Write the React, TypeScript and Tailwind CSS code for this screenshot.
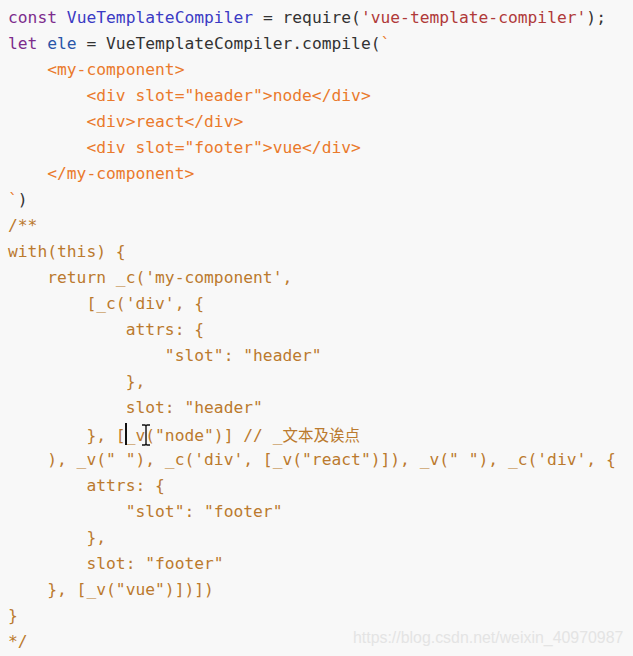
type Tok = [string, string];

const K = 'text-[#7d2c8c]';
const D = 'text-[#3b3bc4]';
const V = 'text-[#2a55a8]';
const P = 'text-[#333333]';
const S = 'text-[#b03a3a]';
const T = 'text-[#ea7a2c]';
const C = 'text-[#bb7a2e]';

const lines: Tok[][] = [
  [[K, 'const'], [P, ' '], [D, 'VueTemplateCompiler'], [P, ' = require('], [S, "'vue-template-compiler'"], [P, ');']],
  [[K, 'let'], [P, ' '], [V, 'ele'], [P, ' = VueTemplateCompiler.compile('], [T, '`']],
  [[T, '    <my-component>']],
  [[T, '        <div slot="header">node</div>']],
  [[T, '        <div>react</div>']],
  [[T, '        <div slot="footer">vue</div>']],
  [[T, '    </my-component>']],
  [[T, '`'], [P, ')']],
  [[C, '/**']],
  [[C, 'with(this) {']],
  [[C, "    return _c('my-component',"]],
  [[C, "        [_c('div', {"]],
  [[C, '            attrs: {']],
  [[C, '                "slot": "header"']],
  [[C, '            },']],
  [[C, '            slot: "header"']],
  [[C, '        }, [_v("node")] // _'], [C + ' cjk', '文本及诶点']],
  [[C, "    ), _v(\" \"), _c('div', [_v(\"react\")]), _v(\" \"), _c('div', {"]],
  [[C, '        attrs: {']],
  [[C, '            "slot": "footer"']],
  [[C, '        },']],
  [[C, '        slot: "footer"']],
  [[C, '    }, [_v("vue")])])']],
  [[C, '}']],
  [[C, '*/']],
];

export default function App() {
  return (
    <div className="relative w-[633px] h-[656px] overflow-hidden bg-[#f8f8f8]">
      <pre className="pl-2 pt-[5px] font-['DejaVu_Sans_Mono',monospace] text-[16.3px] leading-[26px] tracking-normal">
        {lines.map((line, i) => (
          <div key={i} className="h-[26px] whitespace-pre">
            {line.map(([cls, txt], j) => (
              <span
                key={j}
                className={
                  cls.includes('cjk')
                    ? "text-[#bb7a2e] font-['Noto_Sans_CJK_SC',sans-serif] text-[15.5px]"
                    : cls
                }
              >
                {txt}
              </span>
            ))}
          </div>
        ))}
      </pre>

      {/* text caret + mouse I-beam */}
      <div className="absolute left-[125px] top-[423px] w-[2px] h-[22px] bg-[#111]" />
      <svg className="absolute left-[140px] top-[424px]" width="12" height="22" viewBox="0 0 12 22">
        <path d="M2 1h3l1 1 1-1h3M6 2v18M2 21h3l1-1 1 1h3" fill="none" stroke="#111" strokeWidth="1.4" />
      </svg>

      <div className="absolute left-[353px] top-[626px] font-['Liberation_Sans',Arial,sans-serif] text-[15.9px] text-[#e4e4e4]">
        https://blog.csdn.net/weixin_40970987
      </div>
    </div>
  );
}
